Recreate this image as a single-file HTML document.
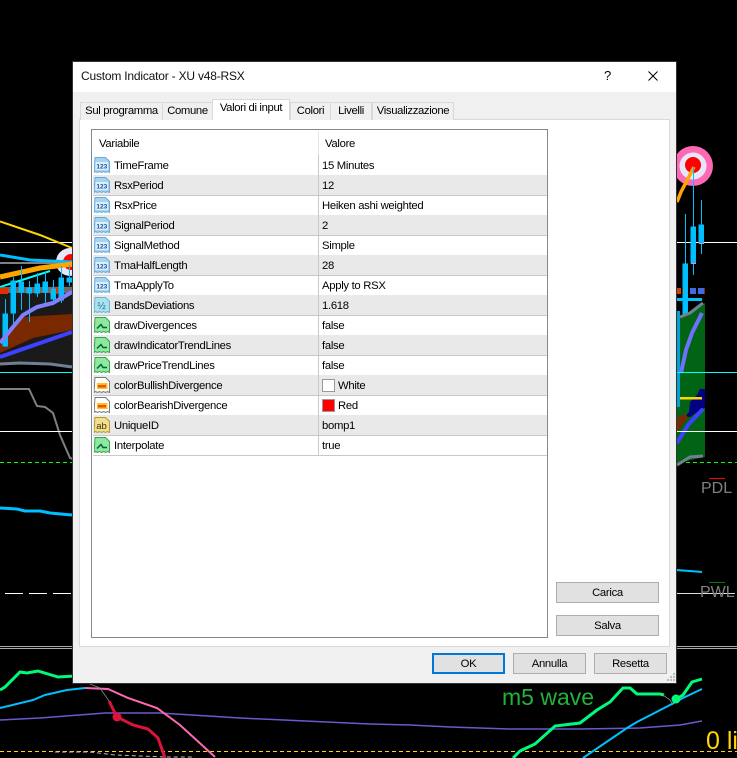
<!DOCTYPE html>
<html><head><meta charset="utf-8">
<style>
html,body{margin:0;padding:0;background:#000}
body{position:relative;width:737px;height:758px;overflow:hidden;font-family:"Liberation Sans",sans-serif;font-size:11.3px;color:#000}
.a{position:absolute;box-sizing:border-box;white-space:nowrap}
.tab{position:absolute;box-sizing:border-box;top:102px;height:18px;background:#f0f0f0;border:1px solid #d9d9d9;border-bottom:0;text-align:center;line-height:17px;font-size:11.3px;letter-spacing:-.35px}
.row{position:absolute;left:93px;width:454px;height:20px;border-bottom:1px solid #c9c9c9}
.row.g{background:#e9e9e9}
.row .n{position:absolute;left:21px;top:4px;line-height:14px;letter-spacing:-.3px}
.row .v{position:absolute;left:229px;top:4px;line-height:14px;letter-spacing:-.3px}
.row .d{position:absolute;left:225px;top:0;width:1px;height:20px;background:#c9c9c9}
.row svg{position:absolute;left:1px;top:2px}
.btn{position:absolute;box-sizing:border-box;height:21px;background:#e1e1e1;border:1px solid #adadad;text-align:center;line-height:21px;letter-spacing:-.3px}
</style></head><body>

<svg class="a" style="left:0;top:0" width="737" height="758" viewBox="0 0 737 758">
<rect width="737" height="758" fill="#000"/>
<!-- left chart -->
<polygon points="0,290 72,285 72,366 0,364" fill="#1a1a1a"/>
<polygon points="0,345 10,327 23,317 72,314 72,330 33,338 0,353" fill="#7a2800"/>
<line x1="0" y1="242.500" x2="72" y2="242.500" stroke="#fff"/>
<polyline points="0,221.500 40,235 72,248" fill="none" stroke="#ffd700" stroke-width="2"/>
<circle cx="70" cy="262" r="14" fill="#e6e6fa"/>
<circle cx="71" cy="262" r="8" fill="#f00"/>
<line x1="0" y1="263" x2="72" y2="263" stroke="#808080" stroke-width="2"/>
<polyline points="0,255 30,260 72,262" fill="none" stroke="#00bfff" stroke-width="3"/>
<polyline points="0,277 40,268 73,264" fill="none" stroke="#ffa500" stroke-width="5"/>
<polyline points="0,287 50,271" fill="none" stroke="#00ffff" stroke-width="2"/>
<rect x="0" y="287" width="72" height="6" fill="#808080" opacity=".8"/>
<rect x="0" y="288" width="8" height="6" fill="#e03000"/>
<rect x="50" y="288" width="8" height="6" fill="#e03000"/>
<g stroke="#00bfff" fill="#00bfff">
<line x1="5.500" y1="299" x2="5.500" y2="347"/><rect x="3" y="314" width="4.500" height="32"/>
<line x1="13.500" y1="277" x2="13.500" y2="325"/><rect x="11" y="281" width="4.500" height="32"/>
<line x1="21.500" y1="266" x2="21.500" y2="310"/><rect x="19" y="282" width="4.500" height="10"/>
<line x1="29.500" y1="281" x2="29.500" y2="322"/><rect x="27" y="288" width="4.500" height="5"/>
<line x1="37.500" y1="273" x2="37.500" y2="297"/><rect x="35" y="284" width="4.500" height="9"/>
<line x1="45.500" y1="272" x2="45.500" y2="304"/><rect x="43" y="282" width="4.500" height="10"/>
<line x1="53.500" y1="280" x2="53.500" y2="305"/><rect x="51" y="289" width="4.500" height="10"/>
<line x1="61.500" y1="266" x2="61.500" y2="303"/><rect x="59" y="278" width="4.500" height="22"/>
<line x1="69.500" y1="265" x2="69.500" y2="286"/><rect x="67" y="278" width="4.500" height="4"/>
</g>
<polyline points="0,343 13,327 23,315 37,307 53,303 72,292" fill="none" stroke="#8080ff" stroke-width="4"/>
<polyline points="0,357 20,350 72,332" fill="none" stroke="#4040ff" stroke-width="4"/>
<polyline points="0,364 20,363 50,364 72,367" fill="none" stroke="#708090" stroke-width="3"/>
<line x1="0" y1="372.500" x2="737" y2="372.500" stroke="#00ffff"/>
<polyline points="0,389 29,389 37,406 45,407 53,413 60,435 70,458 73,459" fill="none" stroke="#808080" stroke-width="2"/>
<line x1="0" y1="431.500" x2="737" y2="431.500" stroke="#fff"/>
<line x1="0" y1="462.500" x2="737" y2="462.500" stroke="#00ff00" stroke-dasharray="4 3"/>
<polyline points="0,508 17,509 25,511 40,511 50,513 72,515" fill="none" stroke="#00bfff" stroke-width="3"/>
<path d="M5 593.500H23M29 593.500H47M53 593.500H71" stroke="#fff"/>
<path d="M0 646.500H737M0 648.500H737" stroke="#aaa"/>
<!-- right chart -->
<line x1="676" y1="242.500" x2="737" y2="242.500" stroke="#fff"/>
<polygon points="676,318 680,317 705,303 705,457 677,463 676,463" fill="#006414"/>
<circle cx="693" cy="166" r="20" fill="#ff69b4"/>
<circle cx="693" cy="166" r="13.500" fill="#e6e6fa"/>
<circle cx="693" cy="165" r="8" fill="#f00"/>
<polyline points="677,202 681,192 694,167" fill="none" stroke="#ffa500" stroke-width="3.500"/>
<g stroke="#00bfff" fill="#00bfff">
<line x1="693.500" y1="167" x2="693.500" y2="275"/><rect x="691" y="227" width="4.500" height="36"/>
<line x1="701.500" y1="200" x2="701.500" y2="254"/><rect x="699" y="225" width="4.500" height="18"/>
<line x1="685.500" y1="214" x2="685.500" y2="264"/><rect x="683" y="264" width="4.500" height="50"/>
</g>
<line x1="691" y1="263.500" x2="696" y2="263.500" stroke="#ff80c0"/>
<line x1="699" y1="243.500" x2="704" y2="243.500" stroke="#ff80c0"/>
<line x1="683" y1="314.500" x2="688" y2="314.500" stroke="#ff80c0"/>
<rect x="676" y="288" width="5" height="6" fill="#d04000"/>
<rect x="682" y="288" width="6" height="6" fill="#803010"/>
<rect x="683" y="288" width="5" height="6" fill="#00bfff"/>
<rect x="690" y="288" width="6" height="6" fill="#4169e1"/>
<rect x="698" y="288" width="6" height="6" fill="#4169e1"/>
<rect x="704" y="288" width="1" height="6" fill="#803010"/>
<rect x="676" y="298" width="26" height="3" fill="#00bfff"/>
<polyline points="680,317 690,313 703,303" fill="none" stroke="#708090" stroke-width="3"/>
<rect x="676" y="311" width="4" height="96" fill="#00a0d8"/>
<polyline points="681,373 686,350 692,333 702,313" fill="none" stroke="#7070ff" stroke-width="4"/>
<polygon points="705,389 700,389 697,395 690,402 689,412 685,417 690,417 703,408 705,408" fill="#000080"/>
<rect x="680" y="397" width="22" height="2.500" fill="#ffd700"/>
<polygon points="676,418 685,414 688,417 677,432 676,432" fill="#7a2800"/>
<polyline points="677,443 688,425 703,409" fill="none" stroke="#4040ff" stroke-width="4"/>
<polyline points="677,465 690,457 703,456" fill="none" stroke="#708090" stroke-width="3"/>
<line x1="676" y1="372.500" x2="737" y2="372.500" stroke="#00ffff"/>
<line x1="676" y1="431.500" x2="737" y2="431.500" stroke="#fff"/>
<line x1="709" y1="478.500" x2="725" y2="478.500" stroke="#f00"/>
<text x="701" y="493" font-size="16" fill="#808080">PDL</text>
<polyline points="676,570 690,571 702,572" fill="none" stroke="#00bfff" stroke-width="2"/>
<line x1="709" y1="582.500" x2="725" y2="582.500" stroke="#008000"/>
<line x1="676" y1="593.500" x2="735" y2="593.500" stroke="#ddd"/>
<text x="700" y="597" font-size="16" fill="#808080">PWL</text>
<!-- bottom -->
<polyline points="0,720 40,718 105,713 160,713 240,718 370,724 410,725 450,727 510,729 580,729 640,728 680,725 702,721" fill="none" stroke="#6a5acd" stroke-width="1.500"/>
<line x1="0" y1="751.500" x2="737" y2="751.500" stroke="#ffd700" stroke-dasharray="4 3"/>
<polyline points="55,752 90,752 115,755 140,756 165,757 195,757" fill="none" stroke="#bbb" stroke-dasharray="4 3"/>
<polyline points="0,690 5,687 20,672 27,673 38,671 58,677 75,676" fill="none" stroke="#00fa7a" stroke-width="3"/>
<polyline points="0,708 33,700 45,695 67,690 85,688" fill="none" stroke="#00bfff" stroke-width="2"/>
<polyline points="85,688 108,689 128,698 157,708 180,725 215,757" fill="none" stroke="#ff69b4" stroke-width="2"/>
<polyline points="90,684 100,688 109,701" fill="none" stroke="#888" stroke-width=".8"/>
<polyline points="109,701 117,717 133,725 148,729 158,738 165,758" fill="none" stroke="#dc143c" stroke-width="3"/>
<circle cx="117" cy="717" r="4.500" fill="#dc143c"/>
<polyline points="513,758 520,751 535,744 555,726 580,723 597,710 610,702 623,688 630,688 637,694 660,694 664,695" fill="none" stroke="#00fa7a" stroke-width="3"/>
<polyline points="676,699 683,695 692,682 702,679" fill="none" stroke="#00fa7a" stroke-width="3"/>
<polyline points="583,758 627,728 637,722 670,705 683,698 702,689" fill="none" stroke="#00bfff" stroke-width="2"/>
<polyline points="663,695 670,700 673,705" fill="none" stroke="#888" stroke-width=".8"/>
<circle cx="676" cy="699" r="4.500" fill="#00fa7a"/>
<text x="502" y="705" font-size="23" fill="#22b33c">m5 wave</text>
<text x="706" y="749" font-size="25" fill="#ffd700">0 li</text>
</svg>

<!-- dialog -->
<div class="a" style="left:72px;top:61px;width:605px;height:623px;background:#f0f0f0;border:1px solid #333"></div>
<div class="a" style="left:73px;top:62px;width:603px;height:30px;background:#fff"></div>
<div class="a" style="left:81px;top:69px;font-size:12px;line-height:15px;letter-spacing:-.2px;color:#111">Custom Indicator - XU v48-RSX</div>
<div class="a" style="left:604px;top:68px;font-size:13px;line-height:16px">?</div>
<svg class="a" style="left:648px;top:71px" width="10" height="10"><path d="M.5.5L9.500 9.500M9.500.5L.5 9.500" stroke="#000" fill="none"/></svg>

<!-- tabs -->
<div class="a" style="left:79px;top:119px;width:591px;height:528px;background:#fff;border:1px solid #d9d9d9"></div>
<div class="tab" style="left:80px;width:83px">Sul programma</div>
<div class="tab" style="left:162px;width:51px">Comune</div>
<div class="tab" style="left:290px;width:41px">Colori</div>
<div class="tab" style="left:330px;width:42px">Livelli</div>
<div class="tab" style="left:372px;width:82px">Visualizzazione</div>
<div class="tab" style="left:212px;top:99px;width:78px;height:21px;background:#fff;line-height:17px;z-index:2">Valori di input</div>

<!-- list -->
<div class="a" style="left:91px;top:129px;width:457px;height:509px;background:#fff;border:1px solid #828790"></div>
<div class="a" style="left:99px;top:137px;line-height:14px;letter-spacing:-.3px">Variabile</div>
<div class="a" style="left:325px;top:137px;line-height:14px;letter-spacing:-.3px">Valore</div>
<div class="a" style="left:318px;top:131px;width:1px;height:24px;background:#e5e5e5"></div>

<div class="row" style="top:155px"><svg width="17" height="17"><path d="M1 .5h10.500l4 4v11l-2-1-2 1-2-1-2 1-2-1-2 1-2-1-1.500 1z" fill="#a5d4f2" stroke="#6aa8d4"/><rect x="1.500" y="5" width="12.500" height="8" fill="#dcf0fb"/><text x="7.800" y="11.500" font-size="6.500" font-weight="bold" fill="#1a4fa0" text-anchor="middle">123</text></svg><span class="n">TimeFrame</span><i class="d"></i><span class="v">15 Minutes</span></div>
<div class="row g" style="top:175px"><svg width="17" height="17"><path d="M1 .5h10.500l4 4v11l-2-1-2 1-2-1-2 1-2-1-2 1-2-1-1.500 1z" fill="#a5d4f2" stroke="#6aa8d4"/><rect x="1.500" y="5" width="12.500" height="8" fill="#dcf0fb"/><text x="7.800" y="11.500" font-size="6.500" font-weight="bold" fill="#1a4fa0" text-anchor="middle">123</text></svg><span class="n">RsxPeriod</span><i class="d"></i><span class="v">12</span></div>
<div class="row" style="top:195px"><svg width="17" height="17"><path d="M1 .5h10.500l4 4v11l-2-1-2 1-2-1-2 1-2-1-2 1-2-1-1.500 1z" fill="#a5d4f2" stroke="#6aa8d4"/><rect x="1.500" y="5" width="12.500" height="8" fill="#dcf0fb"/><text x="7.800" y="11.500" font-size="6.500" font-weight="bold" fill="#1a4fa0" text-anchor="middle">123</text></svg><span class="n">RsxPrice</span><i class="d"></i><span class="v">Heiken ashi weighted</span></div>
<div class="row g" style="top:215px"><svg width="17" height="17"><path d="M1 .5h10.500l4 4v11l-2-1-2 1-2-1-2 1-2-1-2 1-2-1-1.500 1z" fill="#a5d4f2" stroke="#6aa8d4"/><rect x="1.500" y="5" width="12.500" height="8" fill="#dcf0fb"/><text x="7.800" y="11.500" font-size="6.500" font-weight="bold" fill="#1a4fa0" text-anchor="middle">123</text></svg><span class="n">SignalPeriod</span><i class="d"></i><span class="v">2</span></div>
<div class="row" style="top:235px"><svg width="17" height="17"><path d="M1 .5h10.500l4 4v11l-2-1-2 1-2-1-2 1-2-1-2 1-2-1-1.500 1z" fill="#a5d4f2" stroke="#6aa8d4"/><rect x="1.500" y="5" width="12.500" height="8" fill="#dcf0fb"/><text x="7.800" y="11.500" font-size="6.500" font-weight="bold" fill="#1a4fa0" text-anchor="middle">123</text></svg><span class="n">SignalMethod</span><i class="d"></i><span class="v">Simple</span></div>
<div class="row g" style="top:255px"><svg width="17" height="17"><path d="M1 .5h10.500l4 4v11l-2-1-2 1-2-1-2 1-2-1-2 1-2-1-1.500 1z" fill="#a5d4f2" stroke="#6aa8d4"/><rect x="1.500" y="5" width="12.500" height="8" fill="#dcf0fb"/><text x="7.800" y="11.500" font-size="6.500" font-weight="bold" fill="#1a4fa0" text-anchor="middle">123</text></svg><span class="n">TmaHalfLength</span><i class="d"></i><span class="v">28</span></div>
<div class="row" style="top:275px"><svg width="17" height="17"><path d="M1 .5h10.500l4 4v11l-2-1-2 1-2-1-2 1-2-1-2 1-2-1-1.500 1z" fill="#a5d4f2" stroke="#6aa8d4"/><rect x="1.500" y="5" width="12.500" height="8" fill="#dcf0fb"/><text x="7.800" y="11.500" font-size="6.500" font-weight="bold" fill="#1a4fa0" text-anchor="middle">123</text></svg><span class="n">TmaApplyTo</span><i class="d"></i><span class="v">Apply to RSX</span></div>
<div class="row g" style="top:295px"><svg width="17" height="17"><path d="M1 .5h10.500l4 4v11l-2-1-2 1-2-1-2 1-2-1-2 1-2-1-1.500 1z" fill="#a8e2f0" stroke="#6ab4d0"/><text x="7.500" y="12" font-size="10" fill="#1f6f8f" text-anchor="middle">½</text></svg><span class="n">BandsDeviations</span><i class="d"></i><span class="v">1.618</span></div>
<div class="row" style="top:315px"><svg width="17" height="17"><path d="M1 .5h10.500l4 4v11l-2-1-2 1-2-1-2 1-2-1-2 1-2-1-1.500 1z" fill="#8fe8a0" stroke="#3aa050"/><path d="M3 11.500L7 7.500l2 3h4" fill="none" stroke="#063" stroke-width="1.500"/></svg><span class="n">drawDivergences</span><i class="d"></i><span class="v">false</span></div>
<div class="row g" style="top:335px"><svg width="17" height="17"><path d="M1 .5h10.500l4 4v11l-2-1-2 1-2-1-2 1-2-1-2 1-2-1-1.500 1z" fill="#8fe8a0" stroke="#3aa050"/><path d="M3 11.500L7 7.500l2 3h4" fill="none" stroke="#063" stroke-width="1.500"/></svg><span class="n">drawIndicatorTrendLines</span><i class="d"></i><span class="v">false</span></div>
<div class="row" style="top:355px"><svg width="17" height="17"><path d="M1 .5h10.500l4 4v11l-2-1-2 1-2-1-2 1-2-1-2 1-2-1-1.500 1z" fill="#8fe8a0" stroke="#3aa050"/><path d="M3 11.500L7 7.500l2 3h4" fill="none" stroke="#063" stroke-width="1.500"/></svg><span class="n">drawPriceTrendLines</span><i class="d"></i><span class="v">false</span></div>
<div class="row g" style="top:375px"><svg width="17" height="17"><path d="M1 .5h10.500l4 4v11l-2-1-2 1-2-1-2 1-2-1-2 1-2-1-1.500 1z" fill="#fff" stroke="#777"/><rect x="3" y="6" width="10.500" height="6" fill="#ffc020"/><rect x="4" y="8" width="8" height="2.500" fill="#f05000"/></svg><span class="n">colorBullishDivergence</span><i class="d"></i><span class="v" style="left:245px">White</span><div class="a" style="left:229px;top:4px;width:13px;height:13px;background:#fff;border:1px solid #999"></div></div>
<div class="row" style="top:395px"><svg width="17" height="17"><path d="M1 .5h10.500l4 4v11l-2-1-2 1-2-1-2 1-2-1-2 1-2-1-1.500 1z" fill="#fff" stroke="#777"/><rect x="3" y="6" width="10.500" height="6" fill="#ffc020"/><rect x="4" y="8" width="8" height="2.500" fill="#f05000"/></svg><span class="n">colorBearishDivergence</span><i class="d"></i><span class="v" style="left:245px">Red</span><div class="a" style="left:229px;top:4px;width:13px;height:13px;background:#f00;border:1px solid #999"></div></div>
<div class="row g" style="top:415px"><svg width="17" height="17"><path d="M1 .5h10.500l4 4v11l-2-1-2 1-2-1-2 1-2-1-2 1-2-1-1.500 1z" fill="#f0e090" stroke="#b09a30"/><text x="7.500" y="12" font-size="9.500" fill="#430" text-anchor="middle">ab</text></svg><span class="n">UniqueID</span><i class="d"></i><span class="v">bomp1</span></div>
<div class="row" style="top:435px"><svg width="17" height="17"><path d="M1 .5h10.500l4 4v11l-2-1-2 1-2-1-2 1-2-1-2 1-2-1-1.500 1z" fill="#8fe8a0" stroke="#3aa050"/><path d="M3 11.500L7 7.500l2 3h4" fill="none" stroke="#063" stroke-width="1.500"/></svg><span class="n">Interpolate</span><i class="d"></i><span class="v">true</span></div>

<!-- buttons -->
<div class="btn" style="left:556px;top:582px;width:103px">Carica</div>
<div class="btn" style="left:556px;top:615px;width:103px">Salva</div>
<div class="btn" style="left:432px;top:653px;width:73px;border:2px solid #0078d7;line-height:19px">OK</div>
<div class="btn" style="left:513px;top:653px;width:73px">Annulla</div>
<div class="btn" style="left:594px;top:653px;width:73px">Resetta</div>
<svg class="a" style="left:665px;top:672px" width="11" height="11"><path d="M8 1h2v2H8zM5 4h2v2H5zM8 4h2v2H8zM2 7h2v2H2zM5 7h2v2H5zM8 7h2v2H8z" fill="#bbb"/></svg>
</body></html>
